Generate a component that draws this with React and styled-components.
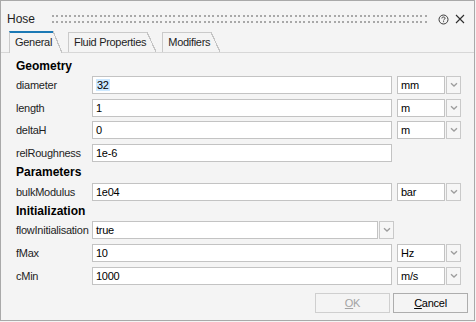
import React from "react";
import styled, { createGlobalStyle } from "styled-components";

const GlobalStyle = createGlobalStyle`
  html, body {
    margin: 0;
    padding: 0;
    background: #f4f4f4;
  }
  * {
    box-sizing: border-box;
  }
`;

const Window = styled.div`
  width: 475px;
  height: 321px;
  border: 1px solid #a9a9a9;
  background: #f4f4f4;
  display: flex;
  flex-direction: column;
  font-family: "Liberation Sans", Arial, sans-serif;
  font-size: 11px;
  letter-spacing: -0.25px;
  color: #1e1e1e;
`;

// title bar with the drag grip
const TitleBar = styled.div`
  display: flex;
  align-items: center;
  height: 22px;
  margin-top: 7px;
  padding: 0 9px 0 6px;
`;

const Title = styled.span`
  font-size: 12px;
  letter-spacing: 0;
  color: #1e1e1e;
`;

const Grip = styled.div`
  flex: 1;
  height: 8px;
  margin: 0 9px 0 17px;
  background-image: linear-gradient(to bottom, transparent 2px, #f4f4f4 2px),
    linear-gradient(to right, #a8a8a8 2px, transparent 2px);
  background-size: 13px 6px, 13px 6px;
  position: relative;

  &::before,
  &::after {
    content: "";
    position: absolute;
    inset: 0;
    background-image: inherit;
    background-size: 13px 6px;
  }
  &::before {
    background-position: 4px 0;
  }
  &::after {
    background-position: 9px 0;
  }
`;

const IconButton = styled.span`
  display: inline-flex;
  align-items: center;
  justify-content: center;
  width: ${(p) => p.$w}px;
  height: 12px;
  margin-left: ${(p) => p.$ml || 0}px;
`;

// tabs
const TabStrip = styled.div`
  display: flex;
  align-items: flex-end;
  height: 23px;
  padding-left: 8px;
  border-bottom: 1px solid #d7d7d7;
`;

const Tab = styled.div`
  position: relative;
  height: ${(p) => (p.$active ? 22 : 20)}px;
  margin-bottom: ${(p) => (p.$active ? -1 : 0)}px;
  margin-right: 15px;
  padding: 0 1px 0 5px;
  border-top: ${(p) => (p.$active ? "2px solid #1b79b5" : "1px solid #cacaca")};
  border-left: 1px solid #cacaca;
  background: #f4f4f4;
  line-height: ${(p) => (p.$active ? 19 : 18)}px;
  letter-spacing: -0.3px;
  color: #1e1e1e;
  white-space: nowrap;
  z-index: ${(p) => (p.$active ? 2 : 1)};

  &::after {
    content: "";
    position: absolute;
    left: 100%;
    top: ${(p) => (p.$active ? -2 : -1)}px;
    width: 9px;
    height: calc(100% + ${(p) => (p.$active ? 2 : 1)}px);
    background: linear-gradient(
      to top right,
      #f4f4f4 0,
      #f4f4f4 calc(50% - 0.6px),
      #c4c4c4 calc(50% - 0.6px),
      #c4c4c4 calc(50% + 0.6px),
      transparent calc(50% + 0.6px)
    );
  }
`;

// panel
const Panel = styled.div`
  display: flex;
  flex-direction: column;
  padding: 3px 15px 0 15px;
`;

const SectionTitle = styled.div`
  height: ${(p) => p.$h || 20}px;
  line-height: ${(p) => p.$h || 20}px;
  font-size: 12px;
  font-weight: bold;
  letter-spacing: 0;
  color: #000;
`;

const Rows = styled.div`
  display: flex;
  flex-direction: column;
  gap: ${(p) => p.$gap || 4.5}px;
`;

const Row = styled.div`
  display: flex;
  align-items: center;
  height: 18px;
`;

const Label = styled.div`
  width: 76px;
  flex-shrink: 0;
  white-space: nowrap;
  color: #1e1e1e;
`;

const TextBox = styled.div`
  width: ${(p) => p.$w}px;
  height: 18px;
  flex-shrink: 0;
  padding-left: 3px;
  border: 1px solid #c3c3c3;
  background: #fff;
  line-height: 16px;
  color: #000;
  white-space: nowrap;
  overflow: hidden;
`;

const Selected = styled.span`
  background: #cce8ff;
  padding: 0 1px;
`;

const DropButton = styled.div`
  width: 15px;
  height: 18px;
  flex-shrink: 0;
  margin-left: 1px;
  border: 1px solid #c9c9c9;
  background: #f6f6f6;
  display: flex;
  align-items: center;
  justify-content: center;
`;

const UnitCombo = styled.div`
  display: flex;
  margin-left: 5px;
`;

// footer buttons
const Footer = styled.div`
  margin-top: auto;
  display: flex;
  justify-content: flex-end;
  gap: 3px;
  padding: 0 6px 7px 0;
`;

const Button = styled.button`
  width: 75px;
  height: 20px;
  padding: 0;
  border: 1px solid ${(p) => (p.disabled ? "#cfcfcf" : "#adadad")};
  background: #f4f4f4;
  font-family: "Liberation Sans", Arial, sans-serif;
  font-size: 11px;
  letter-spacing: -0.25px;
  color: ${(p) => (p.disabled ? "#a3a3a3" : "#000")};
`;

const Chevron = () => (
  <svg width="8" height="6" viewBox="0 0 8 6">
    <path d="M1 1.2 L4 4 L7 1.2" fill="none" stroke="#9d9d9d" strokeWidth="1.3" />
  </svg>
);

const HelpIcon = () => (
  <svg width="11" height="11" viewBox="0 0 11 11">
    <circle cx="5.5" cy="5.5" r="4.5" fill="none" stroke="#3a3a3a" strokeWidth="1" />
    <path
      d="M3.9 4.4 C3.9 3.4 4.6 3 5.5 3 C6.4 3 7.1 3.5 7.1 4.3 C7.1 5.2 5.6 5.3 5.6 6.4"
      fill="none"
      stroke="#3a3a3a"
      strokeWidth="1"
    />
    <rect x="5.1" y="7.2" width="1" height="1" fill="#3a3a3a" />
  </svg>
);

const CloseIcon = () => (
  <svg width="10" height="10" viewBox="0 0 10 10">
    <path d="M1 1 L9 9 M9 1 L1 9" stroke="#2e2e2e" strokeWidth="1.1" />
  </svg>
);

function Field({ label, value, unit, combo }) {
  return (
    <Row>
      <Label>{label}</Label>
      {combo ? (
        <>
          <TextBox $w={286}>{value}</TextBox>
          <DropButton>
            <Chevron />
          </DropButton>
        </>
      ) : (
        <TextBox $w={300}>{value}</TextBox>
      )}
      {unit && (
        <UnitCombo>
          <TextBox $w={48}>{unit}</TextBox>
          <DropButton>
            <Chevron />
          </DropButton>
        </UnitCombo>
      )}
    </Row>
  );
}

export default function App() {
  return (
    <>
      <GlobalStyle />
      <Window>
        <TitleBar>
          <Title>Hose</Title>
          <Grip />
          <IconButton $w={11}>
            <HelpIcon />
          </IconButton>
          <IconButton $w={10} $ml={6}>
            <CloseIcon />
          </IconButton>
        </TitleBar>

        <TabStrip>
          <Tab $active>General</Tab>
          <Tab>Fluid Properties</Tab>
          <Tab>Modifiers</Tab>
        </TabStrip>

        <Panel>
          <SectionTitle>Geometry</SectionTitle>
          <Rows>
            <Field label="diameter" value={<Selected>32</Selected>} unit="mm" />
            <Field label="length" value="1" unit="m" />
            <Field label="deltaH" value="0" unit="m" />
            <Field label="relRoughness" value="1e-6" />
          </Rows>

          <SectionTitle $h={21}>Parameters</SectionTitle>
          <Rows>
            <Field label="bulkModulus" value="1e04" unit="bar" />
          </Rows>

          <SectionTitle>Initialization</SectionTitle>
          <Rows $gap={5}>
            <Field label="flowInitialisation" value="true" combo />
            <Field label="fMax" value="10" unit="Hz" />
            <Field label="cMin" value="1000" unit="m/s" />
          </Rows>
        </Panel>

        <Footer>
          <Button disabled>
            <u>O</u>K
          </Button>
          <Button>
            <u>C</u>ancel
          </Button>
        </Footer>
      </Window>
    </>
  );
}
